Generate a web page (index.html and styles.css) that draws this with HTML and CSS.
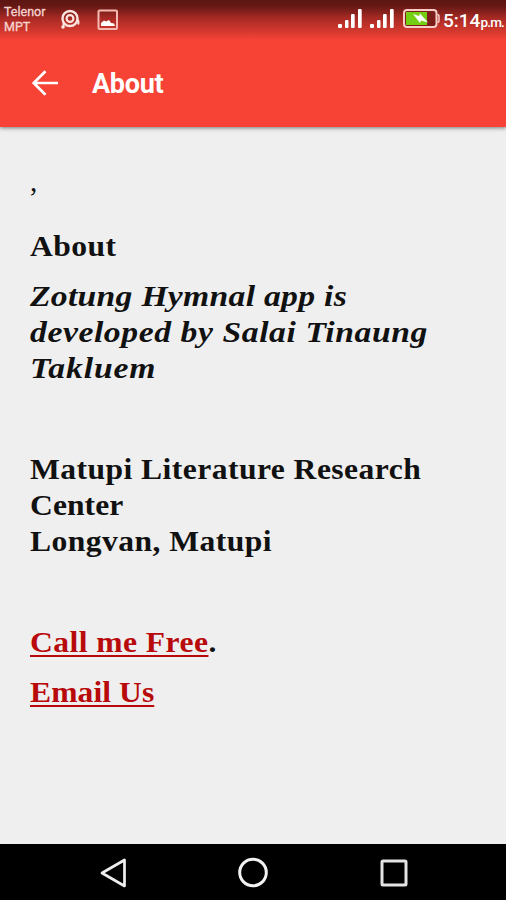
FILE: index.html
```html
<!DOCTYPE html>
<html lang="en">
<head>
<meta charset="utf-8">
<title>About</title>
<link rel="stylesheet" href="styles.css">
</head>
<body>
<header class="top">
  <div class="status">
    <div class="carrier">Telenor<br>MPT</div>
    <svg class="tape" width="22" height="22" viewBox="0 0 22 22" fill="none" stroke="#fbe4df">
      <circle cx="10" cy="9.500" r="7.500" stroke-width="2.400"/>
      <circle cx="10" cy="9.500" r="3.400" stroke-width="2.200"/>
      <path d="M17 10.500q2.200 1 1.200 5M3.500 14v3.500" stroke-width="2"/>
      <circle cx="3" cy="18" r="1.800" fill="#fbe4df" stroke="none"/>
    </svg>
    <svg class="photo" width="22" height="22" viewBox="0 0 22 22">
      <rect x="1.500" y="1.500" width="18.500" height="18.500" rx="1" fill="none" stroke="#f3b9b2" stroke-width="2"/>
      <path d="M4 17v-3l3-2.500 2 1 3-1.500 2 3 3 .5 1 2.500z" fill="#fff"/>
    </svg>
    <div class="indicators">
      <svg class="signal" width="24" height="20" viewBox="0 0 24 20" fill="#fff">
        <rect x="0" y="15" width="4" height="4" rx="1"/><rect x="7" y="11" width="3.500" height="8" rx="1"/><rect x="13" y="5" width="3.700" height="14" rx="1"/><rect x="20" y="0" width="3.700" height="19" rx="1"/>
      </svg>
      <svg class="signal second" width="24" height="20" viewBox="0 0 24 20" fill="#fff">
        <rect x="0" y="15" width="4" height="4" rx="1"/><rect x="7" y="11" width="3.500" height="8" rx="1"/><rect x="13" y="5" width="3.700" height="14" rx="1"/><rect x="20" y="0" width="3.700" height="19" rx="1"/>
      </svg>
      <svg class="battery" width="37" height="20" viewBox="0 0 37 20">
        <rect x="1" y="1" width="32.500" height="17" rx="3" fill="#7c1d1a" stroke="#f8cdc8" stroke-width="2"/>
        <path d="M34.500 5.500q1.500 0 1.500 2v4q0 2-1.500 2" fill="none" stroke="#f8cdc8" stroke-width="1.500"/>
        <rect x="3" y="3" width="21" height="13" fill="#74cf13"/>
        <path d="M10 5l6 2 1-2.500 8 9-7-2-1 2.500z" fill="#fff"/>
      </svg>
      <div class="clock">5:14<span class="meridiem">p.m.</span></div>
    </div>
  </div>
  <div class="toolbar">
    <svg width="28" height="28" viewBox="0 0 28 28" fill="none" stroke="#fff" stroke-width="2.700"><path d="M27 14H3M14.500 2.200L2.700 14l11.800 11.800"/></svg>
    <h1 class="title">About</h1>
  </div>
</header>
<main class="content">
  <p class="comma">,</p>
  <h2 class="heading"><span class="line">About</span></h2>
  <p class="intro"><span class="line snug">Zotung Hymnal app is</span><br><span class="line">developed by Salai Tinaung</span><br><span class="line loose">Takluem</span></p>
  <p class="address"><span class="line">Matupi Literature Research</span><br><span class="line tight">Center</span><br><span class="line">Longvan, Matupi</span></p>
  <p class="call"><span class="line"><a class="link" href="#call">Call me Free</a>.</span></p>
  <p class="email"><span class="line tight"><a class="link" href="#email">Email Us</a></span></p>
</main>
<nav class="nav">
  <svg width="30" height="32" viewBox="0 0 30 32" fill="none" stroke="#eee" stroke-width="2.700" stroke-linejoin="round"><path d="M25.500 3v26L3 16z"/></svg>
  <svg width="32" height="32" viewBox="0 0 32 32" fill="none" stroke="#f2f2f2" stroke-width="3"><circle cx="15" cy="15.500" r="13.300"/></svg>
  <svg width="30" height="32" viewBox="0 0 30 32" fill="none" stroke="#e4e4e4" stroke-width="3"><rect x="3" y="4" width="24" height="24" rx="1"/></svg>
</nav>
</body>
</html>
```
FILE: styles.css
```css
* { box-sizing: border-box; }
body {
  margin: 0;
  height: 900px;
  display: flex;
  flex-direction: column;
  background: #efefef;
  overflow: hidden;
}
p, h1, h2 { margin: 0; }
.top {
  height: 127px;
  flex: none;
  background: #f64336;
  font-family: Roboto, "Liberation Sans", sans-serif;
  color: #fff;
  box-shadow: 0 1px 4px rgba(0, 0, 0, .5);
}
.status {
  height: 40px;
  display: flex;
  align-items: flex-start;
  background: linear-gradient(#5c1512 0, #651814 6px, #a72a24 18px, #d6392f 32px, #f64336 40px);
}
.carrier {
  width: 56px;
  padding: 4px 0 0 4px;
  font-size: 12.5px;
  line-height: 15px;
  color: #f6d5d1;
  -webkit-text-stroke: .3px;
}
.tape { margin: 9px 0 0 4px; }
.photo { margin: 9px 0 0 15px; }
.indicators {
  display: flex;
  margin-left: auto;
  padding: 9px 2px 0 0;
}
.second { margin-left: 8px; }
.battery { margin-left: 9px; }
.clock {
  width: 61px;
  margin-left: 3px;
  font-size: 19px;
  font-weight: 500;
  line-height: 23px;
  white-space: nowrap;
}
.meridiem { font-size: 13.5px; letter-spacing: -.8px; }
.toolbar {
  height: 86px;
  display: flex;
  align-items: center;
  padding-left: 31px;
}
.title {
  margin: 1px 0 0 33px;
  font-size: 27px;
  font-weight: 700;
  letter-spacing: -.3px;
}
.content {
  flex: 1;
  padding: 36px 30px 0;
  font: bold 29px/36px "Liberation Serif", serif;
  color: #111;
  white-space: nowrap;
}
.comma { font-weight: 400; }
.heading { margin-top: 29px; font-size: inherit; }
.intro { margin-top: 14px; font-style: italic; }
.address { margin-top: 65px; }
.call { margin-top: 65px; }
.email { margin-top: 14px; }
.line {
  display: inline-block;
  vertical-align: top;
  letter-spacing: .4px;
  transform: scaleX(1.09);
  transform-origin: left;
}
.intro .line { letter-spacing: .5px; transform: scaleX(1.16); }
.intro .snug { letter-spacing: .25px; }
.intro .loose { letter-spacing: .75px; }
.tight { letter-spacing: .05px; }
.link {
  color: #b8090b;
  text-decoration: underline;
  text-decoration-thickness: 1.5px;
  text-underline-offset: 3px;
  text-decoration-skip-ink: none;
}
.nav {
  height: 56px;
  display: flex;
  justify-content: space-between;
  align-items: center;
  padding: 1px 97px 0 99px;
  background: #000;
}
```
